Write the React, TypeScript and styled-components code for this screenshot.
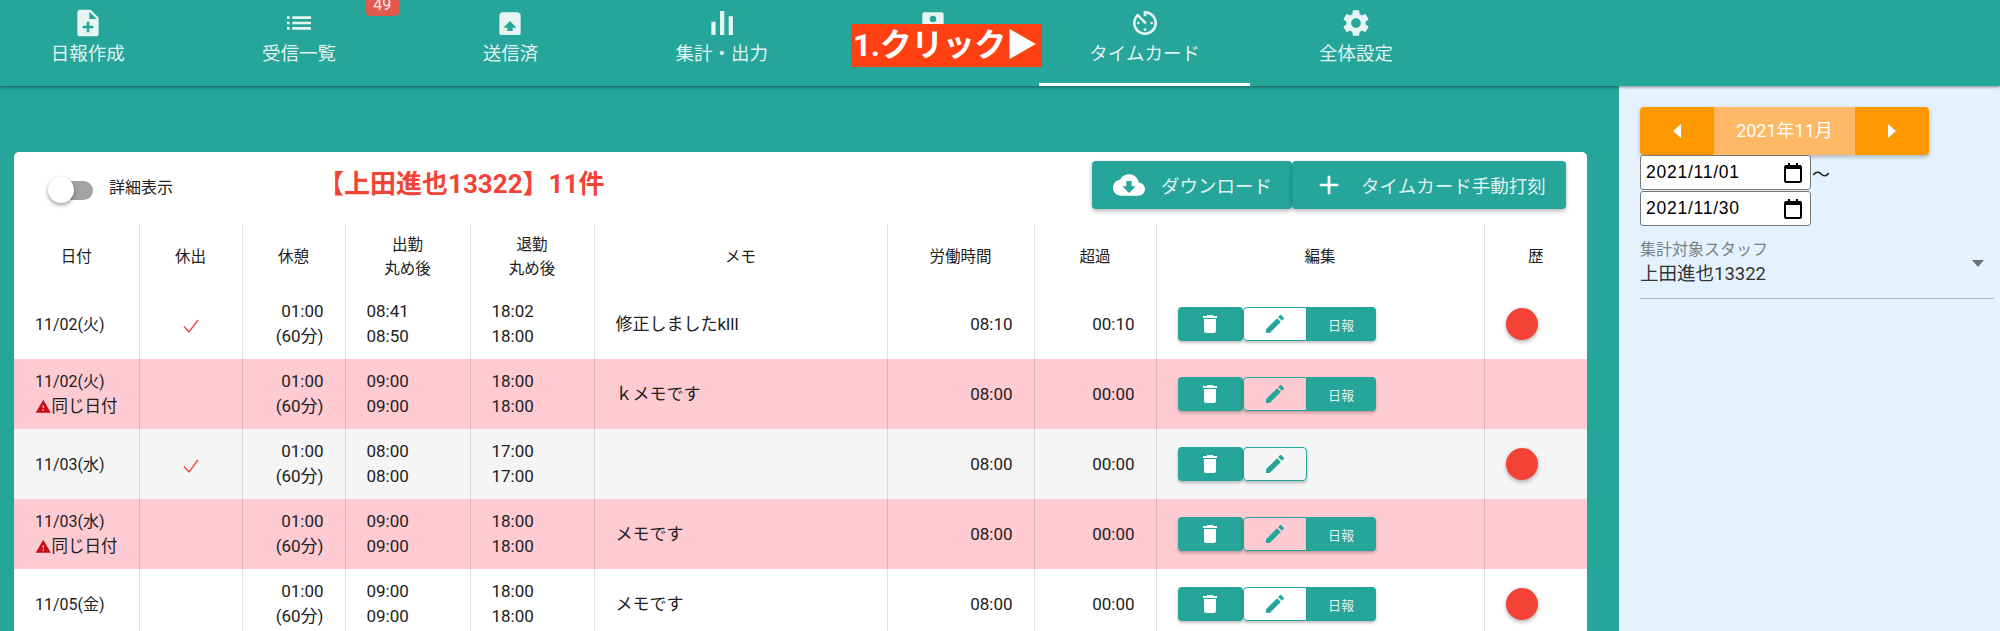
import React from 'react';
import styled, { createGlobalStyle } from 'styled-components';

const TEAL = '#26a69a';
const FONT = `Roboto, "Noto Sans CJK JP", sans-serif`;

const GlobalStyle = createGlobalStyle`
  html, body {
    margin: 0;
    height: 631px;
    overflow: hidden;
    background: ${TEAL};
    font-family: ${FONT};
  }
  * { box-sizing: border-box; }
`;

const Page = styled.div`
  width: 2000px;
  height: 631px;
  display: flex;
  flex-direction: column;
  overflow: hidden;
`;

// ヘッダー
const Header = styled.header`
  position: relative;
  z-index: 2;
  flex: 0 0 86px;
  display: flex;
  background: ${TEAL};
  box-shadow: 0 1px 3px rgba(0, 0, 0, 0.45);
`;

const Tabs = styled.nav`
  display: flex;
  margin-left: -18px;
`;

const Tab = styled.div<{ $active?: boolean }>`
  position: relative;
  width: 211.4px;
  height: 86px;
  padding-top: 7px;
  display: flex;
  flex-direction: column;
  align-items: center;
  color: rgba(255, 255, 255, 0.88);
  border-bottom: 3px solid ${props => (props.$active ? '#fff' : 'transparent')};
`;

const TabIcon = styled.svg`
  width: 32px;
  height: 32px;
  fill: #e6f4f2;
`;

const TabLabel = styled.span`
  margin-top: 2px;
  font-size: 18.5px;
  line-height: 26px;
`;

const Badge = styled.span`
  position: absolute;
  top: -8px;
  right: 6px;
  width: 33px;
  height: 24px;
  border-radius: 4px;
  background: #e05a4e;
  color: rgba(255, 255, 255, 0.9);
  font-size: 16px;
  line-height: 26px;
  text-align: center;
`;

const ClickNote = styled.div`
  position: absolute;
  left: 851px;
  top: 24px;
  width: 191px;
  height: 43px;
  background: #ff4013;
  color: #fff;
  font-size: 32px;
  font-weight: 700;
  line-height: 43px;
  white-space: nowrap;
  padding-left: 2px;
  letter-spacing: -0.5px;
`;

// 本体
const Body = styled.div`
  flex: 1;
  display: flex;
  min-height: 0;
`;

const Main = styled.main`
  flex: 0 0 1619px;
  padding: 66px 32px 0 14px;
  background: ${TEAL};
`;

const Card = styled.section`
  background: #fff;
  border-radius: 5px 5px 0 0;
  color: #212121;
`;

const Toolbar = styled.div`
  height: 72px;
  display: flex;
  align-items: center;
  padding: 0 21px 0 34px;
`;

const Toggle = styled.span`
  position: relative;
  width: 33px;
  height: 19px;
  margin-top: 4px;
  margin-left: 12px;
  border-radius: 10px;
  background: #a3a3a3;
`;

const ToggleThumb = styled.span`
  position: absolute;
  left: -12px;
  top: -4px;
  width: 26px;
  height: 26px;
  border-radius: 50%;
  background: #fff;
  box-shadow: 0 2px 4px rgba(0, 0, 0, 0.4);
`;

const ToggleLabel = styled.span`
  margin: -5px 0 0 16px;
  font-size: 16px;
`;

const Title = styled.h2`
  margin: -13px 0 0 145px;
  font-size: 26px;
  font-weight: 700;
  color: #f44336;
`;

const ToolButtons = styled.div`
  margin-left: auto;
  margin-top: -6px;
  display: flex;
`;

const ToolButton = styled.button<{ $width: number }>`
  width: ${props => props.$width}px;
  height: 48px;
  display: flex;
  align-items: center;
  gap: 16px;
  padding: 0 0 0 21px;
  border: none;
  border-radius: 4px;
  background: ${TEAL};
  color: rgba(255, 255, 255, 0.88);
  font-family: ${FONT};
  font-size: 18.5px;
  box-shadow: 0 2px 4px rgba(0, 0, 0, 0.3);
  svg {
    width: 32px;
    height: 32px;
    fill: #fff;
    flex: none;
  }
`;

const Table = styled.table`
  width: 100%;
  table-layout: fixed;
  border-collapse: collapse;
`;

const Col = styled.col<{ $w: number }>`
  width: ${props => props.$w}px;
`;

const Th = styled.th`
  height: 65px;
  padding: 0;
  font-size: 15.5px;
  font-weight: 400;
  line-height: 24px;
  text-align: center;
  border-right: 1px solid rgba(0, 0, 0, 0.12);
  &:last-child {
    border-right: none;
  }
`;

const Tr = styled.tr<{ $bg: string }>`
  background: ${props => props.$bg};
`;

const Td = styled.td<{ $align?: string }>`
  height: 70px;
  padding: 0 21px;
  font-size: 17px;
  line-height: 25px;
  text-align: ${props => props.$align || 'left'};
  border-right: 1px solid rgba(0, 0, 0, 0.12);
  &:last-child {
    border-right: none;
  }
`;

const DateCell = styled(Td)`
  font-size: 16px;
  white-space: nowrap;
`;

const SameDate = styled.span`
  display: flex;
  align-items: center;
  font-size: 16.5px;
  svg {
    width: 17px;
    height: 17px;
    fill: #c20f1a;
  }
`;

const Check = styled.svg`
  display: block;
  margin: 4px auto 0;
  width: 18px;
  height: 18px;
  fill: none;
  stroke: #f44336;
  stroke-width: 1.3;
`;

const EditGroup = styled.div`
  display: flex;
  width: 198px;
`;

const EditButton = styled.button<{ $w: number; $outline?: boolean }>`
  width: ${props => props.$w}px;
  height: 34px;
  padding: 0;
  display: flex;
  align-items: center;
  justify-content: center;
  background: ${props => (props.$outline ? 'transparent' : TEAL)};
  border: ${props => (props.$outline ? `1px solid ${TEAL}` : 'none')};
  border-radius: 4px;
  color: rgba(255, 255, 255, 0.88);
  font-family: ${FONT};
  font-size: 13px;
  box-shadow: 0 2px 3px rgba(0, 0, 0, 0.25);
  svg {
    width: 24px;
    height: 24px;
    fill: ${props => (props.$outline ? TEAL : '#fff')};
  }
  &:nth-child(2):not(:last-child) {
    border-radius: 4px 0 0 4px;
  }
  &:nth-child(3) {
    border-radius: 0 4px 4px 0;
  }
`;

const Dot = styled.span`
  display: block;
  width: 32px;
  height: 32px;
  border-radius: 50%;
  background: #f44336;
  box-shadow: 0 2px 4px rgba(0, 0, 0, 0.3);
`;

// サイドバー
const Side = styled.aside`
  flex: 1;
  padding: 21px 6px 0 21px;
  background: #e3f2fd;
`;

const MonthPicker = styled.div`
  width: 289px;
  height: 48px;
  display: flex;
  background: #ff9800;
  border-radius: 4px;
  box-shadow: 0 2px 4px rgba(0, 0, 0, 0.25);
  overflow: hidden;
`;

const MonthArrow = styled.span`
  width: 74px;
  display: flex;
  align-items: center;
  justify-content: center;
  svg {
    width: 8px;
    height: 14px;
    fill: #fff;
  }
  &:last-child {
    flex: 1;
  }
`;

const MonthLabel = styled.span`
  width: 141px;
  background: #ffb866;
  color: #fff;
  font-size: 18px;
  line-height: 48px;
  text-align: center;
`;

const DateRow = styled.div`
  display: flex;
  align-items: center;
  margin-bottom: 1px;
`;

const DateField = styled.div`
  width: 171px;
  height: 35px;
  display: flex;
  align-items: center;
  justify-content: space-between;
  padding: 0 7px 0 5px;
  background: #fff;
  border: 1px solid #767676;
  border-radius: 3px;
  color: #000;
  font-family: 'Liberation Sans', sans-serif;
  font-size: 17.5px;
  letter-spacing: 0.75px;
  svg {
    width: 20px;
    height: 22px;
    fill: none;
    stroke: #000;
  }
`;

const Tilde = styled.span`
  margin-left: 1px;
  font-size: 18px;
  color: #222;
`;

const SelectField = styled.div`
  position: relative;
  height: 60px;
  margin-top: 13px;
  border-bottom: 1px solid #a9b4bc;
`;

const SelectLabel = styled.div`
  font-size: 16px;
  line-height: 22px;
  color: #7b8084;
`;

const SelectValue = styled.div`
  font-size: 18.5px;
  line-height: 26px;
  color: #333;
`;

const Caret = styled.span`
  position: absolute;
  right: 10px;
  top: 21px;
  border-top: 7px solid #6f7376;
  border-left: 6.5px solid transparent;
  border-right: 6.5px solid transparent;
`;

const icons = {
  note: 'M14 2H6c-1.1 0-1.99.9-1.99 2L4 20c0 1.1.89 2 1.99 2H18c1.1 0 2-.9 2-2V8l-6-6zm2 14h-3v3h-2v-3H8v-2h3v-3h2v3h3v2zm-3-7V3.5L18.5 9H13z',
  list: 'M3 13h2v-2H3v2zm0 4h2v-2H3v2zm0-8h2V7H3v2zm4 4h14v-2H7v2zm0 4h14v-2H7v2zM7 7v2h14V7H7z',
  sent: 'M6.5 4h11C18.9 4 20 5.1 20 6.5v13c0 .8-.7 1.5-1.5 1.5h-13C4.7 21 4 20.3 4 19.5v-13C4 5.1 5.1 4 6.5 4zM12 10.5l-5 5h3V18h4v-2.500h3l-5-5z',
  chart: 'M10.5 3h3.2v18h-3.2zM4 11h3.2v10H4zM17 7h3.200v14H17z',
  report: 'M5.5 4h13c.8 0 1.5.7 1.500 1.500v15c0 .8-.7 1.500-1.500 1.500h-13C4.700 22 4 21.300 4 20.500v-15C4 4.700 4.700 4 5.500 4zM12 6.500a2.500 2.500 0 1 0 0 5 2.500 2.500 0 0 0 0-5z',
  timer: 'M11 17c0 .55.45 1 1 1s1-.45 1-1-.45-1-1-1-1 .45-1 1zm0-14v4h2V5.080c3.390.49 6 3.390 6 6.920 0 3.870-3.130 7-7 7s-7-3.130-7-7c0-1.680.59-3.220 1.580-4.420L12 13l1.410-1.410-6.800-6.800v.02C4.420 6.450 3 9.050 3 12c0 4.970 4.020 9 9 9 4.970 0 9-4.030 9-9s-4.030-9-9-9h-1zm7 9c0-.55-.45-1-1-1s-1 .45-1 1 .45 1 1 1 1-.45 1-1zM6 12c0 .55.45 1 1 1s1-.45 1-1-.45-1-1-1-1 .45-1 1z',
  gear: 'M19.140 12.940c.04-.3.06-.61.06-.94 0-.32-.02-.64-.07-.94l2.030-1.580c.18-.14.23-.41.12-.61l-1.920-3.320c-.12-.22-.37-.29-.59-.22l-2.390.96c-.5-.38-1.030-.7-1.620-.94l-.36-2.540c-.04-.24-.24-.41-.48-.41h-3.840c-.24 0-.43.17-.47.41l-.36 2.540c-.59.24-1.130.57-1.620.94l-2.390-.96c-.22-.08-.47 0-.59.22L2.740 8.870c-.12.21-.08.47.12.61l2.030 1.580c-.05.3-.09.63-.09.94s.02.64.07.94l-2.030 1.580c-.18.14-.23.41-.12.61l1.920 3.320c.12.22.37.29.59.22l2.390-.96c.5.38 1.030.7 1.620.94l.36 2.540c.05.24.24.41.48.41h3.840c.24 0 .44-.17.47-.41l.36-2.540c.59-.24 1.130-.56 1.620-.94l2.390.96c.22.08.47 0 .59-.22l1.920-3.320c.12-.22.07-.47-.12-.61l-2.010-1.580zM12 15.600c-1.980 0-3.600-1.620-3.600-3.600s1.620-3.600 3.600-3.600 3.600 1.620 3.600 3.600-1.620 3.600-3.600 3.600z',
  cloud: 'M19.350 10.040C18.670 6.590 15.640 4 12 4 9.110 4 6.600 5.640 5.350 8.040 2.340 8.360 0 10.910 0 14c0 3.310 2.690 6 6 6h13c2.760 0 5-2.240 5-5 0-2.640-2.050-4.780-4.650-4.960zM17 13l-5 5-5-5h3V9h4v4h3z',
  plus: 'M19 13h-6v6h-2v-6H5v-2h6V5h2v6h6v2z',
  trash: 'M6 19c0 1.100.9 2 2 2h8c1.100 0 2-.9 2-2V7H6v12zM19 4h-3.500l-1-1h-5l-1 1H5v2h14V4z',
  pencil: 'M3 17.250V21h3.750L17.810 9.940l-3.750-3.750L3 17.250zM20.710 7.040c.39-.39.39-1.020 0-1.410l-2.340-2.340c-.39-.39-1.020-.39-1.410 0l-1.830 1.830 3.750 3.750 1.830-1.830z',
  warning: 'M1 21h22L12 2 1 21zm12-3h-2v-2h2v2zm0-4h-2v-4h2v4z',
};

const Icon = ({ d }: { d: string }) => (
  <svg viewBox="0 0 24 24">
    <path d={d} />
  </svg>
);

const CalendarIcon = () => (
  <svg viewBox="0 0 20 22">
    <rect x="2" y="4" width="16" height="16" rx="1.500" strokeWidth="2" />
    <rect x="2" y="3" width="16" height="4" fill="#000" strokeWidth="0" />
    <path d="M6 1v3M14 1v3" strokeWidth="2" />
  </svg>
);

const tabs = [
  { label: '日報作成', icon: icons.note },
  { label: '受信一覧', icon: icons.list, badge: '49' },
  { label: '送信済', icon: icons.sent },
  { label: '集計・出力', icon: icons.chart },
  { label: '', icon: icons.report },
  { label: 'タイムカード', icon: icons.timer, active: true },
  { label: '全体設定', icon: icons.gear },
];

const columns = [125, 103, 103, 125, 124, 293, 147, 122, 328, 103];

const rows = [
  { bg: '#fff', date: '11/02(火)', off: true, in: ['08:41', '08:50'], out: ['18:02', '18:00'], memo: '修正しましたklll', work: '08:10', over: '00:10', report: true, dot: true },
  { bg: '#ffcbd3', date: '11/02(火)', same: true, in: ['09:00', '09:00'], out: ['18:00', '18:00'], memo: 'ｋメモです', work: '08:00', over: '00:00', report: true },
  { bg: '#f5f5f5', date: '11/03(水)', off: true, in: ['08:00', '08:00'], out: ['17:00', '17:00'], memo: '', work: '08:00', over: '00:00', dot: true },
  { bg: '#ffcbd3', date: '11/03(水)', same: true, in: ['09:00', '09:00'], out: ['18:00', '18:00'], memo: 'メモです', work: '08:00', over: '00:00', report: true },
  { bg: '#fff', date: '11/05(金)', in: ['09:00', '09:00'], out: ['18:00', '18:00'], memo: 'メモです', work: '08:00', over: '00:00', report: true, dot: true },
];

export default function App() {
  return (
    <Page>
      <GlobalStyle />
      <Header>
        <Tabs>
          {tabs.map(tab => (
            <Tab key={tab.icon} $active={tab.active}>
              {tab.badge && <Badge>{tab.badge}</Badge>}
              <TabIcon viewBox="0 0 24 24">
                <path d={tab.icon} />
              </TabIcon>
              <TabLabel>{tab.label}</TabLabel>
            </Tab>
          ))}
        </Tabs>
        <ClickNote>1.クリック▶</ClickNote>
      </Header>
      <Body>
        <Main>
          <Card>
            <Toolbar>
              <Toggle>
                <ToggleThumb />
              </Toggle>
              <ToggleLabel>詳細表示</ToggleLabel>
              <Title>【上田進也13322】11件</Title>
              <ToolButtons>
                <ToolButton $width={200}>
                  <Icon d={icons.cloud} />
                  ダウンロード
                </ToolButton>
                <ToolButton $width={274}>
                  <Icon d={icons.plus} />
                  タイムカード手動打刻
                </ToolButton>
              </ToolButtons>
            </Toolbar>
            <Table>
              <colgroup>
                {columns.map((w, i) => (
                  <Col key={i} $w={w} />
                ))}
              </colgroup>
              <thead>
                <tr>
                  <Th>日付</Th>
                  <Th>休出</Th>
                  <Th>休憩</Th>
                  <Th>出勤<br />丸め後</Th>
                  <Th>退勤<br />丸め後</Th>
                  <Th>メモ</Th>
                  <Th>労働時間</Th>
                  <Th>超過</Th>
                  <Th>編集</Th>
                  <Th>歴</Th>
                </tr>
              </thead>
              <tbody>
                {rows.map((row, i) => (
                  <Tr key={i} $bg={row.bg}>
                    <DateCell>
                      {row.date}
                      {row.same && (
                        <SameDate>
                          <Icon d={icons.warning} />
                          同じ日付
                        </SameDate>
                      )}
                    </DateCell>
                    <Td>
                      {row.off && (
                        <Check viewBox="0 0 18 18">
                          <path d="M2 9.500l5 5.500L16 3" />
                        </Check>
                      )}
                    </Td>
                    <Td $align="right">01:00<br />(60分)</Td>
                    <Td>{row.in[0]}<br />{row.in[1]}</Td>
                    <Td>{row.out[0]}<br />{row.out[1]}</Td>
                    <Td>{row.memo}</Td>
                    <Td $align="right">{row.work}</Td>
                    <Td $align="right">{row.over}</Td>
                    <Td>
                      <EditGroup>
                        <EditButton $w={65}>
                          <Icon d={icons.trash} />
                        </EditButton>
                        <EditButton $w={64} $outline>
                          <Icon d={icons.pencil} />
                        </EditButton>
                        {row.report && <EditButton $w={69}>日報</EditButton>}
                      </EditGroup>
                    </Td>
                    <Td>{row.dot && <Dot />}</Td>
                  </Tr>
                ))}
              </tbody>
            </Table>
          </Card>
        </Main>
        <Side>
          <MonthPicker>
            <MonthArrow>
              <svg viewBox="0 0 8 14"><path d="M8 0v14L0 7z" /></svg>
            </MonthArrow>
            <MonthLabel>2021年11月</MonthLabel>
            <MonthArrow>
              <svg viewBox="0 0 8 14"><path d="M0 0v14l8-7z" /></svg>
            </MonthArrow>
          </MonthPicker>
          <DateRow>
            <DateField>
              2021/11/01
              <CalendarIcon />
            </DateField>
            <Tilde>〜</Tilde>
          </DateRow>
          <DateRow>
            <DateField>
              2021/11/30
              <CalendarIcon />
            </DateField>
          </DateRow>
          <SelectField>
            <SelectLabel>集計対象スタッフ</SelectLabel>
            <SelectValue>上田進也13322</SelectValue>
            <Caret />
          </SelectField>
        </Side>
      </Body>
    </Page>
  );
}
